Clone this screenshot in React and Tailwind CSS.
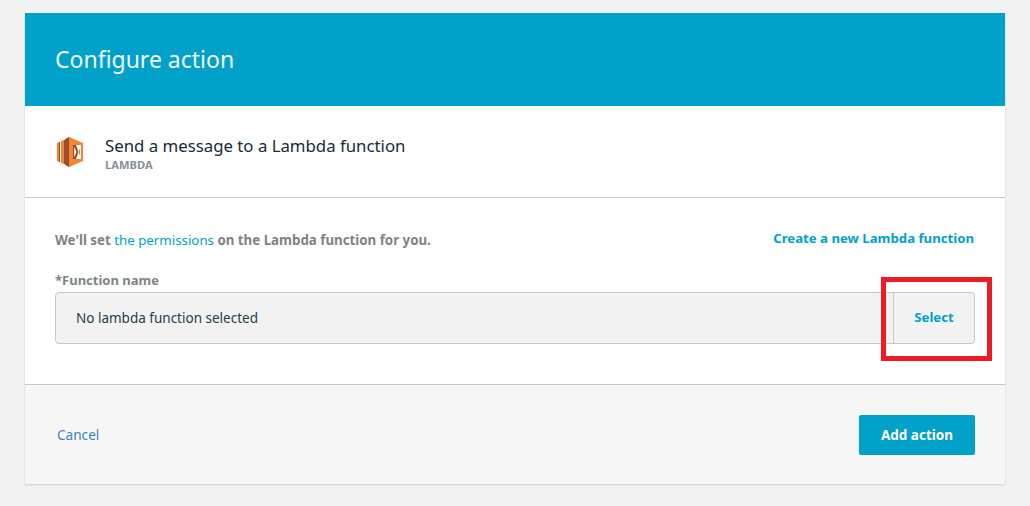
const LambdaIcon = () => (
  <svg width="26" height="30" viewBox="0 0 26 30" className="shrink-0">
    <path d="M0 6 L2 5 V25 L0 24 Z" fill="#f58536" />
    <path d="M2 5 L3 5 V25 L2 25 Z" fill="#9d5025" />
    <path d="M4 4 L7 3 V27 L4 26 Z" fill="#f58536" />
    <path d="M7 3 L8 3 V27 L7 27 Z" fill="#9d5025" />
    <path d="M8 2 L12 0 V30 L8 28 Z" fill="#9d5025" />
    <path d="M12 0 L26 6 V24 L12 30 Z" fill="#f58536" />
    <path d="M16 8 H24 V22 H16 Z" fill="#9d5025" />
    <path d="M19 8 H24 V22 H19 L21.5 15 Z" fill="#ffffff" />
    <path d="M17 10 L19.5 15 L17 20 Z" fill="#ffffff" />
    <path d="M21.5 15 L23 11 V19 Z" fill="#f58536" />
  </svg>
);

export default function App() {
  return (
    <div className="relative h-[506px] w-[1030px] overflow-hidden bg-[#f2f2f2] pt-[13px] pl-[25px] font-['Noto_Sans',sans-serif]">
      <div className="flex h-[471px] w-[980px] flex-col bg-white shadow-[0_1px_2px_rgba(0,0,0,0.15)]">
        {/* Header */}
        <div className="flex h-[93px] items-center bg-[#00a1c9] px-[30px]">
          <h1 className="-mt-[1px] text-[23px] font-normal text-[#f2f8fa]">Configure action</h1>
        </div>

        {/* Action title */}
        <div className="flex h-[92px] items-center gap-[22px] border-b border-[#c8c8c8] pl-[32px]">
          <LambdaIcon />
          <div className="mt-[3px]">
            <p className="text-[16.8px] leading-[22px] text-[#152b39]">Send a message to a Lambda function</p>
            <p className="mt-[1px] text-[11.2px] leading-[13px] font-bold text-[#879196]">LAMBDA</p>
          </div>
        </div>

        {/* Form */}
        <div className="flex h-[187px] flex-col border-b border-[#c8c8c8] px-[30px] pt-[33px]">
          <div className="flex items-start justify-between pr-[1px]">
            <p className="text-[13.3px] leading-[18px] font-bold text-[#7d8386]">
              We'll set <span className="font-normal text-[#00a1c9]">the permissions</span> on the Lambda function for you.
            </p>
            <a className="-mt-[2px] text-[13.2px] leading-[18px] font-bold text-[#00a1c9]">Create a new Lambda function</a>
          </div>
          <label className="mt-[22px] text-[13px] leading-[18px] font-bold text-[#7d8386]">*Function name</label>
          <div className="mt-[3px] flex h-[52px] w-[920px] items-center rounded-[4px] border border-[#c8c8c8] bg-[#f2f2f2]">
            <span className="flex-1 pl-[20px] text-[13.5px] text-[#263d4a]">No lambda function selected</span>
            <button className="flex h-full w-[81px] items-center justify-center border-l border-[#c8c8c8] text-[13.2px] font-bold text-[#00a1c9]">
              Select
            </button>
          </div>
        </div>

        {/* Footer */}
        <div className="flex flex-1 items-center justify-between bg-[#f6f6f6] pr-[30px] pl-[32px]">
          <a className="mt-[1px] text-[13.6px] text-[#3f83c1]">Cancel</a>
          <button className="h-[40px] w-[116px] rounded-[2px] bg-[#00a1c9] pt-[1px] text-[13.5px] font-bold text-white">Add action</button>
        </div>
      </div>

      {/* Annotation */}
      <div className="absolute top-[277px] left-[881px] h-[84px] w-[111px] border-[5px] border-[#ed1c24]" />
    </div>
  );
}
